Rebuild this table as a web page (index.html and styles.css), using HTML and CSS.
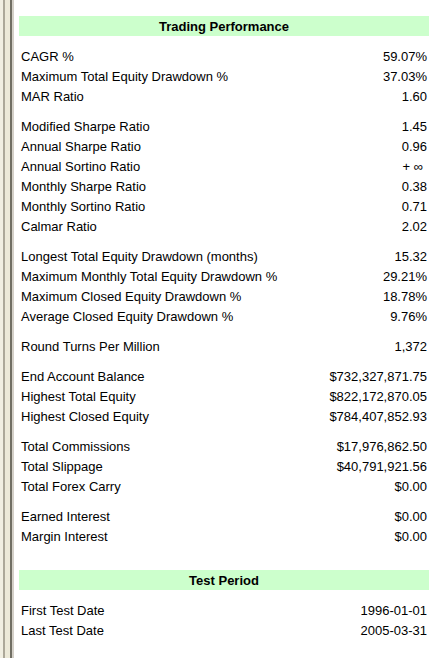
FILE: index.html
```html
<!DOCTYPE html>
<html>
<head>
<meta charset="utf-8">
<link rel="stylesheet" href="styles.css">
</head>
<body>
<div class="page">
  <div class="splitter"></div>
  <div class="main">
    <div class="header">Trading Performance</div>
    <div class="group">
      <div class="row"><span>CAGR %</span><span>59.07%</span></div>
      <div class="row"><span>Maximum Total Equity Drawdown %</span><span>37.03%</span></div>
      <div class="row"><span>MAR Ratio</span><span>1.60</span></div>
    </div>
    <div class="group">
      <div class="row"><span>Modified Sharpe Ratio</span><span>1.45</span></div>
      <div class="row"><span>Annual Sharpe Ratio</span><span>0.96</span></div>
      <div class="row"><span>Annual Sortino Ratio</span><span class="inf">+ ∞</span></div>
      <div class="row"><span>Monthly Sharpe Ratio</span><span>0.38</span></div>
      <div class="row"><span>Monthly Sortino Ratio</span><span>0.71</span></div>
      <div class="row"><span>Calmar Ratio</span><span>2.02</span></div>
    </div>
    <div class="group">
      <div class="row"><span>Longest Total Equity Drawdown (months)</span><span>15.32</span></div>
      <div class="row"><span>Maximum Monthly Total Equity Drawdown %</span><span>29.21%</span></div>
      <div class="row"><span>Maximum Closed Equity Drawdown %</span><span>18.78%</span></div>
      <div class="row"><span>Average Closed Equity Drawdown %</span><span>9.76%</span></div>
    </div>
    <div class="group">
      <div class="row"><span>Round Turns Per Million</span><span>1,372</span></div>
    </div>
    <div class="group">
      <div class="row"><span>End Account Balance</span><span>$732,327,871.75</span></div>
      <div class="row"><span>Highest Total Equity</span><span>$822,172,870.05</span></div>
      <div class="row"><span>Highest Closed Equity</span><span>$784,407,852.93</span></div>
    </div>
    <div class="group">
      <div class="row"><span>Total Commissions</span><span>$17,976,862.50</span></div>
      <div class="row"><span>Total Slippage</span><span>$40,791,921.56</span></div>
      <div class="row"><span>Total Forex Carry</span><span>$0.00</span></div>
    </div>
    <div class="group">
      <div class="row"><span>Earned Interest</span><span>$0.00</span></div>
      <div class="row"><span>Margin Interest</span><span>$0.00</span></div>
    </div>
    <div class="header second">Test Period</div>
    <div class="group">
      <div class="row"><span>First Test Date</span><span>1996-01-01</span></div>
      <div class="row"><span>Last Test Date</span><span>2005-03-31</span></div>
    </div>
  </div>
</div>
</body>
</html>
```
FILE: styles.css
```css
html, body {
  margin: 0;
  padding: 0;
  background: #ffffff;
}
body {
  font-family: "Liberation Sans", Arial, sans-serif;
  font-size: 13px;
  color: #000000;
}
.page {
  display: flex;
  width: 436px;
  height: 658px;
  overflow: hidden;
}
.splitter {
  flex: 0 0 14px;
  height: 100%;
  background: linear-gradient(to right,
    #f1efe2 0px, #f1efe2 3px,
    #aca899 3px, #aca899 5px,
    #ece9d8 5px, #ece9d8 10px,
    #716f64 10px, #716f64 12px,
    #d4d0c8 12px, #d4d0c8 14px);
}
.main {
  flex: 1;
  padding: 16px 7px 0 5px;
}
.header {
  height: 18px;
  padding-top: 2px;
  line-height: 18px;
  background: #ccffcc;
  text-align: center;
  font-weight: bold;
}
.header.second {
  margin-top: 24px;
}
.group {
  margin-top: 10px;
}
.row {
  display: flex;
  justify-content: space-between;
  height: 18px;
  padding: 2px 2px 0 2px;
  line-height: 18px;
  white-space: nowrap;
}
.inf {
  padding-right: 4px;
}
```
